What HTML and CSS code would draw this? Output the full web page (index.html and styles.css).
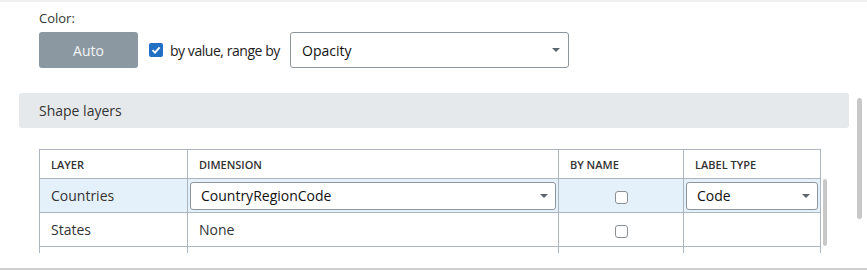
FILE: index.html
```html
<!DOCTYPE html>
<html lang="en">
<head>
    <meta charset="UTF-8">
    <title>Map Settings</title>
    <link rel="stylesheet" href="styles.css">
</head>
<body>
    <div class="top-strip"></div>
    <div class="page">
        <div class="content">
            <div class="color-field">
                <label class="field-label">Color:</label>
                <div class="color-row">
                    <button class="auto-btn">Auto</button>
                    <span class="checkbox checked">
                        <svg width="10" height="10" viewBox="0 0 10 10"><path d="M1.5 5.2 L4 7.6 L8.6 2.4" fill="none" stroke="#fff" stroke-width="1.8"/></svg>
                    </span>
                    <span class="check-label">by value, range by</span>
                    <div class="select range-select">
                        <span>Opacity</span>
                        <span class="caret"></span>
                    </div>
                </div>
            </div>

            <div class="section-header">Shape layers</div>

            <div class="table-wrap">
                <div class="table-scroll">
                    <table class="layer-table">
                        <thead>
                            <tr>
                                <th class="col-layer">Layer</th>
                                <th class="col-dim">Dimension</th>
                                <th class="col-name">By name</th>
                                <th class="col-type">Label type</th>
                            </tr>
                        </thead>
                        <tbody>
                            <tr class="selected">
                                <td>Countries</td>
                                <td class="cell-control">
                                    <div class="select">
                                        <span>CountryRegionCode</span>
                                        <span class="caret"></span>
                                    </div>
                                </td>
                                <td class="center"><span class="checkbox"></span></td>
                                <td class="cell-control">
                                    <div class="select">
                                        <span>Code</span>
                                        <span class="caret"></span>
                                    </div>
                                </td>
                            </tr>
                            <tr>
                                <td>States</td>
                                <td>None</td>
                                <td class="center"><span class="checkbox"></span></td>
                                <td></td>
                            </tr>
                            <!-- next row is scrolled out of view -->
                            <tr>
                                <td></td>
                                <td></td>
                                <td></td>
                                <td></td>
                            </tr>
                        </tbody>
                    </table>
                </div>
                <div class="inner-scroll"><div class="thumb"></div></div>
            </div>
        </div>
        <div class="outer-scroll"><div class="thumb"></div></div>
    </div>
    <div class="bottom-line"></div>
</body>
</html>
```

FILE: styles.css
```css
/* Global Styles */
* {
    margin: 0;
    padding: 0;
    box-sizing: border-box;
    font-family: 'Open Sans', sans-serif;
}

body {
    width: 867px;
    height: 270px;
    background-color: #fff;
    color: #333;
    font-size: 14px;
    overflow: hidden;
}

.top-strip {
    height: 2px;
    background-color: #f0f0f0;
}

.page {
    display: flex;
    height: 251px;
}

.content {
    width: 849px;
    padding-left: 19px;
}

/* Color field */
.color-field {
    padding-left: 20px;
}

.field-label {
    display: block;
    margin-top: 7px;
    font-size: 13px;
    line-height: 18px;
    color: #333;
}

.color-row {
    display: flex;
    align-items: center;
    margin-top: 5px;
    height: 36px;
}

.auto-btn {
    width: 99px;
    height: 36px;
    border: none;
    border-radius: 3px;
    background-color: #8c98a1;
    color: #f2f4f6;
    font-size: 14px;
}

.checkbox {
    display: inline-flex;
    align-items: center;
    justify-content: center;
    width: 13px;
    height: 13px;
    border: 1px solid #8a8f94;
    border-radius: 3px;
    background-color: #fff;
}

.checkbox.checked {
    width: 14px;
    height: 14px;
    margin-left: 11px;
    border: none;
    border-radius: 2px;
    background-color: #2170c4;
}

.check-label {
    width: 109px;
    margin-left: 7px;
    color: #222;
    letter-spacing: -0.45px;
    white-space: nowrap;
}

.select {
    display: flex;
    align-items: center;
    justify-content: space-between;
    height: 28px;
    padding: 0 7px 0 10px;
    border: 1px solid #8e969d;
    border-radius: 3px;
    background-color: #fff;
    color: #111;
}

.range-select {
    width: 279px;
    height: 36px;
    margin-left: 11px;
    padding-left: 11px;
    padding-right: 8px;
}

.caret {
    width: 0;
    height: 0;
    border-left: 4px solid transparent;
    border-right: 4px solid transparent;
    border-top: 4px solid #5d646b;
}

/* Section header */
.section-header {
    width: 830px;
    height: 35px;
    margin-top: 25px;
    padding-left: 20px;
    line-height: 35px;
    background-color: #e6e9ec;
    border-radius: 3px;
    color: #333;
}

/* Table */
.table-wrap {
    display: flex;
    margin-top: 21px;
    margin-left: 20px;
}

.table-scroll {
    width: 782px;
    height: 104px;
    overflow: hidden;
}

.layer-table {
    width: 781px;
    border-collapse: collapse;
    table-layout: fixed;
}

.layer-table th,
.layer-table td {
    border: 1px solid #adb6be;
    padding: 0 11px;
    text-align: left;
    white-space: nowrap;
}

.layer-table th {
    height: 29px;
    font-size: 11px;
    font-weight: 600;
    text-transform: uppercase;
    color: #333;
}

.layer-table td {
    height: 34px;
    color: #333;
}

.col-layer { width: 148px; }
.col-dim { width: 371px; }
.col-name { width: 125px; }
.col-type { width: 137px; }

.layer-table tr.selected td {
    background-color: #e5f1fa;
}

.layer-table td.cell-control {
    padding: 0 2px;
}

.layer-table td.center {
    text-align: center;
}

.layer-table td.center .checkbox {
    vertical-align: middle;
}

/* Scrollbars */
.inner-scroll {
    width: 4px;
    margin-left: 2px;
    padding-top: 30px;
}

.inner-scroll .thumb {
    width: 4px;
    height: 67px;
    border-radius: 2px;
    background-color: #c8c8c8;
}

.outer-scroll {
    width: 5px;
    margin-left: 8px;
    padding-top: 96px;
}

.outer-scroll .thumb {
    width: 5px;
    height: 121px;
    border-radius: 3px;
    background-color: #c8c8c8;
}

.bottom-line {
    margin-top: 15px;
    height: 2px;
    background-color: #d0d0d0;
}
```
